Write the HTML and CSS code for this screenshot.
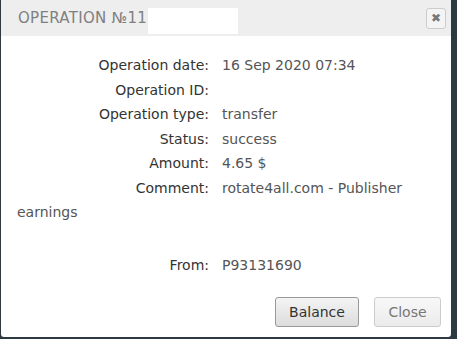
FILE: index.html
```html
<!DOCTYPE html>
<html lang="en">
<head>
    <meta charset="UTF-8">
    <title>Operation</title>
    <link rel="stylesheet" href="styles.css">
</head>
<body>

    <div class="dialog">
        <div class="dialog-header">
            <span class="title">OPERATION №11</span>
            <span class="redacted"></span>
            <button class="close-x">&#10006;</button>
        </div>

        <div class="dialog-body">
            <div class="row"><span class="label">Operation date:</span><span class="value">16 Sep 2020 07:34</span></div>
            <div class="row"><span class="label">Operation ID:</span><span class="value"></span></div>
            <div class="row"><span class="label">Operation type:</span><span class="value">transfer</span></div>
            <div class="row"><span class="label">Status:</span><span class="value">success</span></div>
            <div class="row"><span class="label">Amount:</span><span class="value">4.65 $</span></div>
            <div class="row"><span class="label">Comment:</span><span class="value">rotate4all.com - Publisher earnings</span></div>
            <div class="row from"><span class="label">From:</span><span class="value">P93131690</span></div>
        </div>

        <div class="dialog-footer">
            <button class="btn">Balance</button>
            <button class="btn btn-light">Close</button>
        </div>
    </div>

</body>
</html>
```

FILE: styles.css
```css
body {
    margin: 0;
    background: #2e3a41;
    font-family: "DejaVu Sans", sans-serif;
    font-size: 14px;
    color: #333;
}

.dialog {
    width: 450px;
    height: 337px;
    margin-left: 1px;
    background: #fff;
    border-radius: 0 0 3px 3px;
    display: flex;
    flex-direction: column;
}

.dialog-header {
    height: 36px;
    background: #eee;
    display: flex;
    align-items: center;
    padding: 0 5px 0 17px;
}

.title {
    font-size: 15px;
    letter-spacing: 0.3px;
    color: #808080;
}

.redacted {
    display: inline-block;
    width: 90px;
    height: 26px;
    background: #fff;
    margin-left: 1px;
    margin-top: 6px;
}

.close-x {
    margin-left: auto;
    width: 20px;
    height: 21px;
    padding: 0;
    border: 1px solid #ccc;
    border-radius: 3px;
    background: #f4f4f4;
    color: #777;
    font-size: 12px;
    font-weight: bold;
    line-height: 18px;
    font-family: "DejaVu Sans", sans-serif;
}

.dialog-body {
    padding: 17px 17px 0 16px;
    flex: 1;
}

.row {
    line-height: 24.5px;
}

.row.from {
    margin-top: 28px;
}

.label {
    display: inline-block;
    width: 192px;
    text-align: right;
    margin-right: 13px;
}

.value {
    color: #555;
}

.dialog-footer {
    display: flex;
    justify-content: flex-end;
    gap: 15px;
    padding: 0 10px 10px 0;
}

.btn {
    width: 84px;
    height: 30px;
    font-family: "DejaVu Sans", sans-serif;
    font-size: 14px;
    color: #333;
    border: 1px solid #999;
    border-radius: 3px;
    background: linear-gradient(#f4f4f4, #dcdcdc);
}

.btn-light {
    width: 67px;
    color: #777;
    border-color: #ccc;
    background: linear-gradient(#f8f8f8, #ebebeb);
}
```
